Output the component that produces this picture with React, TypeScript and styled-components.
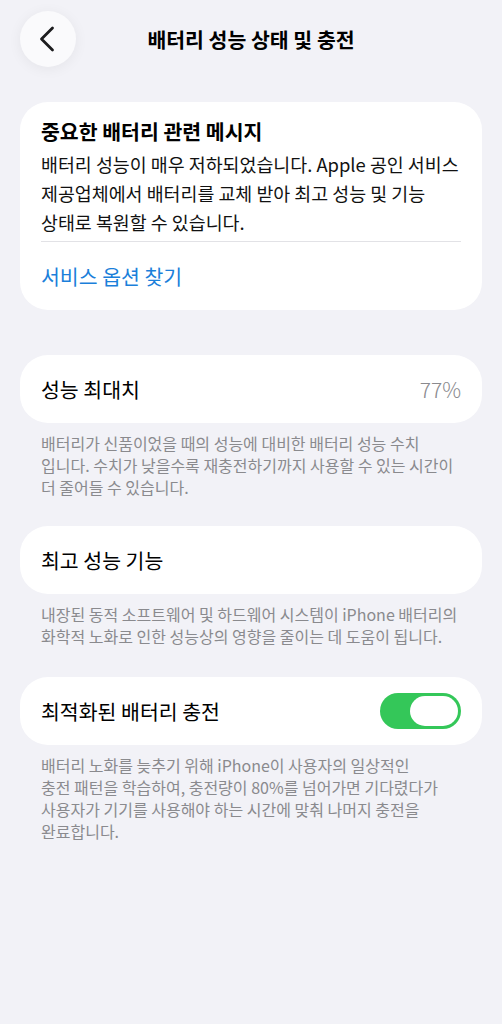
import React, {useState} from 'react';
import styled, {createGlobalStyle} from 'styled-components';

const GlobalStyle = createGlobalStyle`
  html, body {
    margin: 0;
    padding: 0;
    background: #f2f2f7;
  }
  body {
    font-family: "Noto Sans CJK KR", "Noto Sans", sans-serif;
    color: #000;
    -webkit-font-smoothing: antialiased;
  }
`;

const Page = styled.div`
  width: 502px;
  min-height: 1024px;
  box-sizing: border-box;
  padding: 11px 20px 40px;
  display: flex;
  flex-direction: column;
`;

const NavBar = styled.div`
  position: relative;
  height: 56px;
  display: flex;
  align-items: center;
  justify-content: center;
  margin-bottom: 35px;
`;

const BackButton = styled.button`
  position: absolute;
  left: 0;
  top: 0;
  width: 56px;
  height: 56px;
  border-radius: 50%;
  border: none;
  background: #fafafc;
  box-shadow: 0 2px 14px rgba(0, 0, 0, 0.06);
  display: flex;
  align-items: center;
  justify-content: center;
  padding: 0 3px 0 0;
`;

const Title = styled.h1`
  margin: 0;
  font-size: 20.5px;
  font-weight: 600;
`;

const Card = styled.div`
  background: #fff;
  border-radius: 28px;
  padding: 0 21px;
`;

const MessageCard = styled(Card)`
  padding-top: 15px;
  padding-bottom: 19px;
`;

const CardTitle = styled.div`
  font-size: 20.5px;
  font-weight: 600;
  line-height: 28px;
  margin-bottom: 5px;
`;

const Body = styled.div`
  font-size: 18.4px;
  line-height: 29px;
  color: #111;
`;

const Divider = styled.div`
  height: 1px;
  background: #e2e2e6;
  margin: 4px 0 19px;
`;

const Link = styled.a`
  display: block;
  font-size: 20.5px;
  line-height: 30px;
  color: #1b7fda;
`;

const Row = styled(Card)<{$gap: number}>`
  height: 68px;
  display: flex;
  align-items: center;
  justify-content: space-between;
  margin-top: ${({$gap}) => $gap}px;
`;

const RowLabel = styled.span`
  font-size: 20.5px;
`;

const RowValue = styled.span`
  font-size: 21px;
  font-weight: 300;
  color: #8a8a8e;
`;

const Footnote = styled.div`
  padding: 9px 21px 0;
  font-size: 16px;
  line-height: 22px;
  color: #8a8a8e;
`;

const Toggle = styled.button<{$on: boolean}>`
  width: 81px;
  height: 36px;
  border-radius: 18px;
  border: none;
  padding: 3px;
  background: ${({$on}) => ($on ? '#34c759' : '#e5e5ea')};
  display: flex;
  justify-content: ${({$on}) => ($on ? 'flex-end' : 'flex-start')};
  cursor: pointer;
`;

const Knob = styled.span`
  width: 48px;
  height: 30px;
  border-radius: 15px;
  background: #fff;
  display: block;
`;

const ChevronLeft = () => (
  <svg width="16" height="26" viewBox="0 0 16 26" fill="none">
    <path
      d="M13.5 2 L2.5 13 L13.5 24"
      stroke="#1c1c1e"
      strokeWidth="2.8"
      strokeLinecap="round"
      strokeLinejoin="round"
    />
  </svg>
);

export default function App() {
  const [optimized, setOptimized] = useState(true);

  return (
    <>
      <GlobalStyle />
      <Page>
        <NavBar>
          <BackButton aria-label="뒤로">
            <ChevronLeft />
          </BackButton>
          <Title>배터리 성능 상태 및 충전</Title>
        </NavBar>

        <MessageCard>
          <CardTitle>중요한 배터리 관련 메시지</CardTitle>
          <Body>
            배터리 성능이 매우 저하되었습니다. Apple 공인 서비스
            <br />
            제공업체에서 배터리를 교체 받아 최고 성능 및 기능
            <br />
            상태로 복원할 수 있습니다.
          </Body>
          <Divider />
          <Link>서비스 옵션 찾기</Link>
        </MessageCard>

        <Row $gap={45}>
          <RowLabel>성능 최대치</RowLabel>
          <RowValue>77%</RowValue>
        </Row>
        <Footnote>
          배터리가 신품이었을 때의 성능에 대비한 배터리 성능 수치
          <br />
          입니다. 수치가 낮을수록 재충전하기까지 사용할 수 있는 시간이
          <br />
          더 줄어들 수 있습니다.
        </Footnote>

        <Row $gap={28}>
          <RowLabel>최고 성능 기능</RowLabel>
        </Row>
        <Footnote>
          내장된 동적 소프트웨어 및 하드웨어 시스템이 iPhone 배터리의
          <br />
          화학적 노화로 인한 성능상의 영향을 줄이는 데 도움이 됩니다.
        </Footnote>

        <Row $gap={30}>
          <RowLabel>최적화된 배터리 충전</RowLabel>
          <Toggle $on={optimized} onClick={() => setOptimized(!optimized)}>
            <Knob />
          </Toggle>
        </Row>
        <Footnote>
          배터리 노화를 늦추기 위해 iPhone이 사용자의 일상적인
          <br />
          충전 패턴을 학습하여, 충전량이 80%를 넘어가면 기다렸다가
          <br />
          사용자가 기기를 사용해야 하는 시간에 맞춰 나머지 충전을
          <br />
          완료합니다.
        </Footnote>
      </Page>
    </>
  );
}
